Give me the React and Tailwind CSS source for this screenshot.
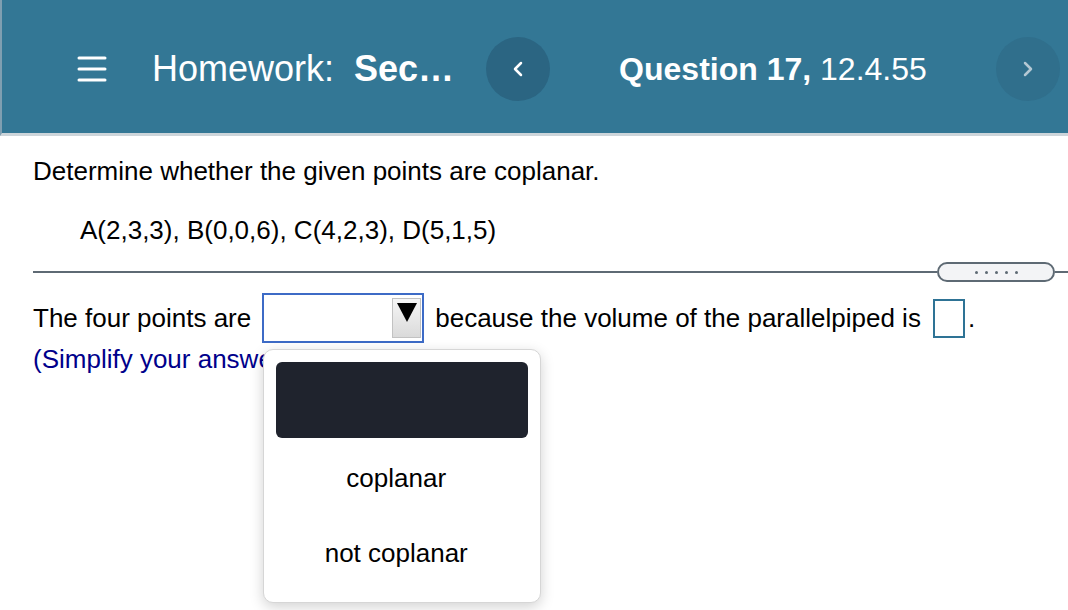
import React from 'react';

function Hamburger() {
    return (
        <svg width="30" height="26" viewBox="0 0 30 26" fill="none">
            <path d="M2 2h26M2 13h26M2 24h26" stroke="white" strokeWidth="3" strokeLinecap="round" />
        </svg>
    );
}

function Chevron({ dir = 'left', color = 'white' }) {
    const d = dir === 'left' ? 'M9 2L3 8l6 6' : 'M3 2l6 6-6 6';
    return (
        <svg width="12" height="16" viewBox="0 0 12 16" fill="none">
            <path d={d} stroke={color} strokeWidth="2.5" strokeLinecap="round" strokeLinejoin="round" />
        </svg>
    );
}

function DropdownPopup() {
    return (
        <div className="absolute left-[1px] top-[56px] z-10 h-[254px] w-[278px] rounded-[10px] border border-[#d6d6d6] bg-white shadow-[0_4px_14px_rgba(0,0,0,0.18)]">
            <div className="mx-[12px] mt-[12px] h-[76px] rounded-[6px] bg-[#1f232d]" />
            <div className="mt-[25px] pr-[12px] text-center leading-[30px]">coplanar</div>
            <div className="mt-[45px] pr-[12px] text-center leading-[30px]">not coplanar</div>
        </div>
    );
}

export default function App() {
    return (
        <div className="min-h-[610px] bg-white font-['Liberation_Sans',Arial,sans-serif] text-[26px] text-black">
            {/* Top bar */}
            <header className="flex h-[136px] items-center border-b-[3px] border-l-2 border-b-[#cdd5da] border-l-[#7f9fb1] bg-[#337795] pt-[4px] text-white">
                <div className="ml-[75px]">
                    <Hamburger />
                </div>
                <div className="ml-[45px] whitespace-nowrap text-[36px] leading-none">
                    Homework:<span className="ml-[20px] font-bold">Sec…</span>
                </div>
                <button className="ml-[32px] flex h-[64px] w-[64px] items-center justify-center rounded-full bg-[#2b6582]">
                    <Chevron dir="left" />
                </button>
                <div className="ml-[69px] whitespace-nowrap text-[32px] leading-none">
                    <span className="font-bold">Question 17,</span> 12.4.55
                </div>
                <button className="ml-auto mr-[8px] flex h-[64px] w-[64px] items-center justify-center rounded-full bg-[#306f8c]">
                    <Chevron dir="right" color="#b4c8d3" />
                </button>
            </header>

            <main className="pl-[33px]">
                <p className="mt-[20px] leading-[30px]">Determine whether the given points are coplanar.</p>
                <p className="mt-[29px] pl-[47px] leading-[30px]">A(2,3,3), B(0,0,6), C(4,2,3), D(5,1,5)</p>

                {/* divider with expander pill */}
                <div className="mt-[17px] flex h-[20px] items-center">
                    <div className="h-[2px] flex-1 bg-[#5e6a74]" />
                    <div className="flex h-[20px] w-[118px] items-center justify-center gap-[7px] rounded-full border-2 border-[#5e6a74] bg-[#f3f4f6]">
                        {[0, 1, 2, 3, 4].map((i) => (
                            <span key={i} className="h-[3px] w-[3px] rounded-full bg-[#5e6a74]" />
                        ))}
                    </div>
                    <div className="h-[2px] w-[13px] bg-[#5e6a74]" />
                </div>

                {/* answer row */}
                <div className="mt-[11px] flex items-center whitespace-nowrap leading-[30px]">
                    <span>The four points are</span>
                    <div className="relative ml-[11px]">
                        <div className="flex h-[50px] w-[162px] items-start justify-end border-2 border-[#3d6bc6] bg-white pr-[1px] pt-[3px]">
                            <div className="flex h-[40px] w-[29px] justify-center border border-[#c2c2c2] bg-gradient-to-b from-[#f6f6f6] to-[#dadada] pt-[4px]">
                                <svg width="20" height="19" viewBox="0 0 20 19">
                                    <path d="M0 0h20L10 19z" fill="black" />
                                </svg>
                            </div>
                        </div>
                        <DropdownPopup />
                    </div>
                    <span className="ml-[11px]">because the volume of the parallelpiped is</span>
                    <span className="ml-[12px] h-[39px] w-[32px] border-2 border-[#2e7395]" />
                    <span className="ml-[3px]">.</span>
                </div>

                <p className="mt-[1px] leading-[30px] text-[#00008b]">(Simplify your answer.)</p>
            </main>
        </div>
    );
}
